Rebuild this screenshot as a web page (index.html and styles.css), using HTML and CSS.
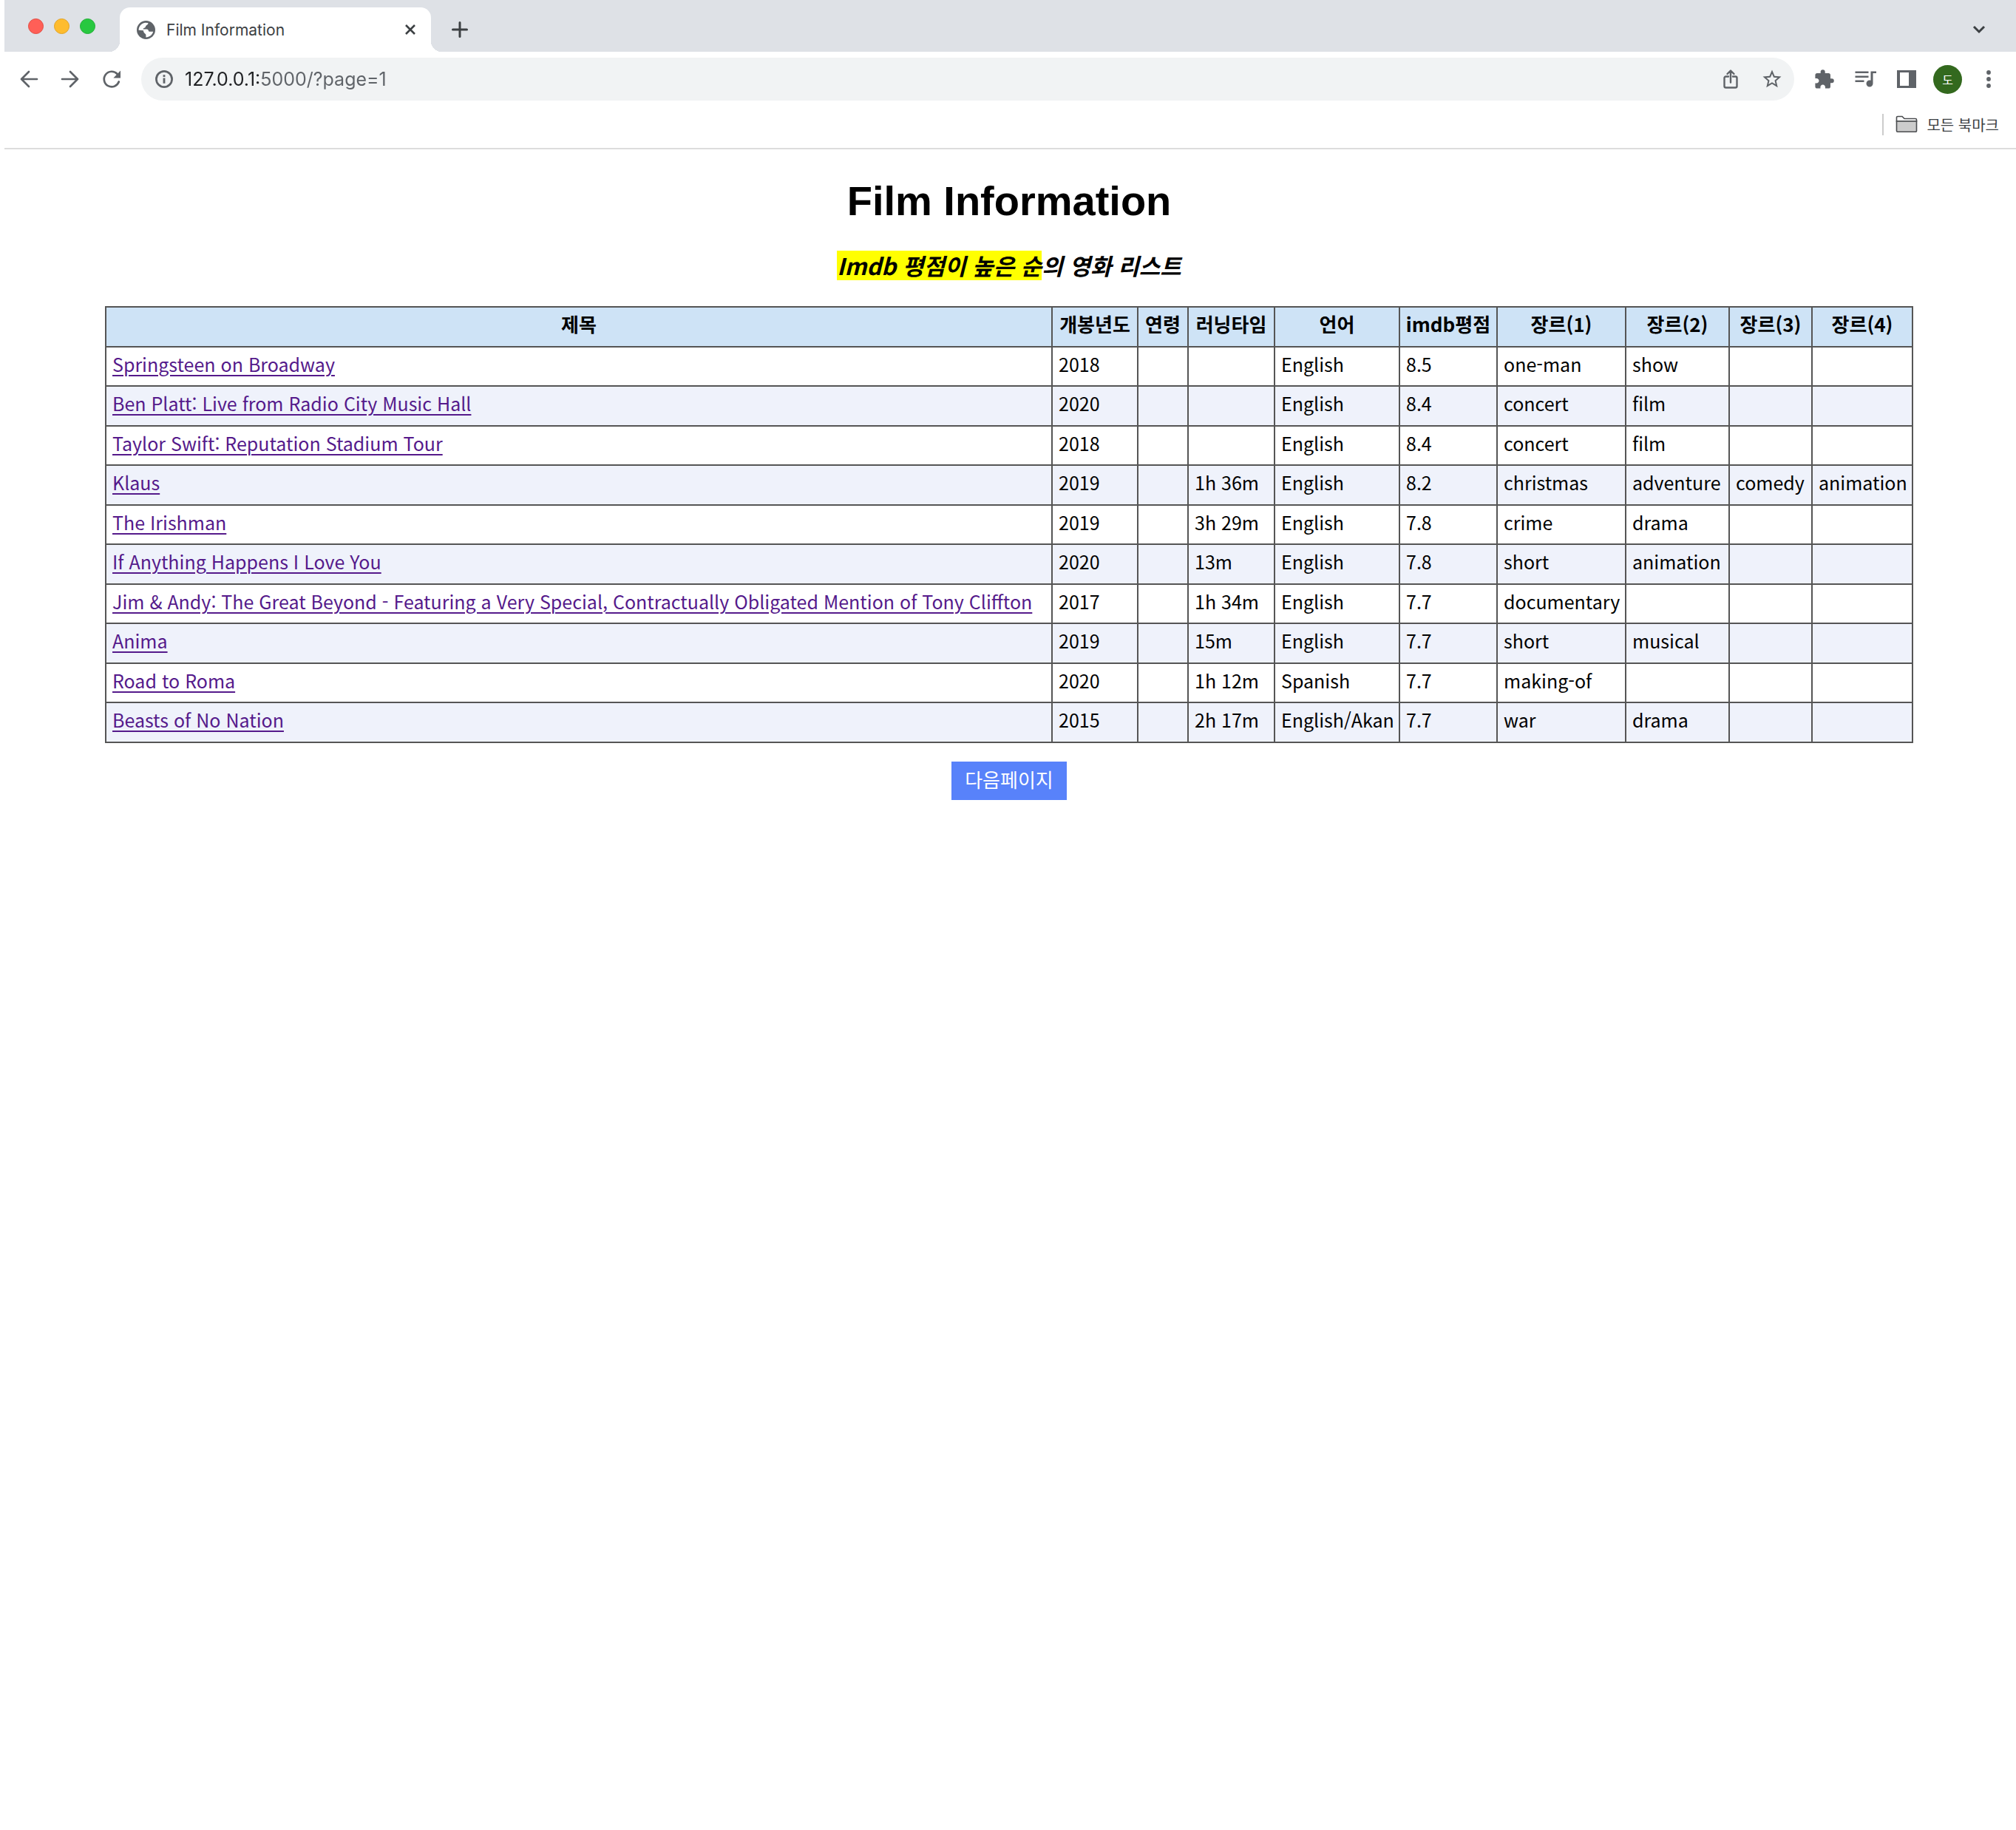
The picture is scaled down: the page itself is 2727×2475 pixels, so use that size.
FILE: index.html
```html
<!DOCTYPE html>
<html lang="ko">
<head>
<meta charset="utf-8">
<title>Film Information</title>
<link rel="stylesheet" href="styles.css">
</head>
<body>
<header class="chrome">
  <div class="tab-strip">
    <div class="lights"><span class="light red"></span><span class="light yellow"></span><span class="light green"></span></div>
    <div class="tab">
      <svg class="favicon" viewBox="0 0 25 25" aria-hidden="true"><circle cx="12.5" cy="12.5" r="12.5" fill="#5f6368"/><path d="M2.6 12.8C2.6 8 6 3.8 11.2 2.8L15.4 3C15.6 6 12.2 5.6 12 8C11.6 10 8.8 9.2 8.6 11.6H13.6C16.4 11.8 15.4 14.8 17 14.8H22.2C21.2 19 17.2 22.4 12.4 22.4V19.4C12.2 16.8 9 17.4 9 13.2Z" fill="#fff"/></svg>
      <span class="tab-title">Film Information</span>
      <button class="icon-button tab-close" aria-label="탭 닫기"><svg width="14" height="14" viewBox="0 0 14 14"><path d="M1 1l12 12M13 1L1 13" stroke="#3c4043" stroke-width="2.6"/></svg></button>
    </div>
    <button class="icon-button new-tab" aria-label="새 탭"><svg width="22" height="22" viewBox="0 0 22 22"><path d="M11 1.5v19M1.5 11h19" stroke="#3c4043" stroke-width="3" stroke-linecap="round"/></svg></button>
    <button class="icon-button tab-search" aria-label="탭 검색"><svg width="18" height="12" viewBox="0 0 18 12"><path d="M2 2l7 7 7-7" fill="none" stroke="#3c4043" stroke-width="3"/></svg></button>
  </div>
  <div class="toolbar">
    <button class="icon-button" aria-label="뒤로"><svg width="32" height="32" viewBox="0 0 32 32"><path class="line" d="M27 16H6M16 6L6 16l10 10"/></svg></button>
    <button class="icon-button" aria-label="앞으로"><svg width="32" height="32" viewBox="0 0 32 32"><path class="line" d="M5 16h21M16 6l10 10-10 10"/></svg></button>
    <button class="icon-button" aria-label="새로고침"><svg width="32" height="32" viewBox="0 0 32 32"><path class="line" d="M25.8 19.5A10.3 10.3 0 1 1 23.6 9"/><path class="solid" d="M28 4.6v10H18.4z"/></svg></button>
    <div class="omnibox">
      <svg width="24" height="24" viewBox="0 0 24 24" aria-hidden="true"><circle class="line" cx="12" cy="12" r="10.6"/><path class="solid" d="M10.6 10.4h2.8v7.4h-2.8zM10.6 6.2h2.8V9h-2.8z"/></svg>
      <input class="url" type="text" aria-label="주소" value="127.0.0.1:5000/?page=1">
      <button class="icon-button small" aria-label="공유"><svg width="24" height="28" viewBox="0 0 24 28"><path class="line thin" d="M9 10.5H5.5a2 2 0 0 0-2 2v11a2 2 0 0 0 2 2h13a2 2 0 0 0 2-2v-11a2 2 0 0 0-2-2H15M12 18.5V3M7.5 7L12 2.5 16.500 7"/></svg></button>
      <button class="icon-button small" aria-label="북마크에 추가"><svg width="30" height="30" viewBox="0 0 24 24"><path class="solid" d="M22 9.240l-7.190-.62L12 2 9.190 8.630 2 9.240l5.460 4.730L5.820 21 12 17.270 18.180 21l-1.630-7.030L22 9.240zM12 15.400l-3.760 2.270 1-4.280-3.320-2.880 4.380-.38L12 6.100l1.710 4.040 4.380.38-3.320 2.880 1 4.280L12 15.400z"/></svg></button>
    </div>
    <button class="icon-button" aria-label="확장 프로그램"><svg width="29" height="29" viewBox="0 0 24 24"><path class="solid" d="M20.500 11H19V7c0-1.100-.9-2-2-2h-4V3.500a2.500 2.500 0 0 0-5 0V5H4c-1.100 0-1.990.9-1.990 2v3.800H3.500c1.490 0 2.700 1.210 2.700 2.700s-1.210 2.700-2.700 2.700H2V20c0 1.100.9 2 2 2h3.800v-1.500c0-1.490 1.210-2.700 2.700-2.700s2.700 1.210 2.700 2.700V22H17c1.100 0 2-.9 2-2v-4h1.500a2.500 2.500 0 0 0 0-5z"/></svg></button>
    <button class="icon-button" aria-label="미디어 제어"><svg width="36" height="36" viewBox="0 0 24 24"><path class="solid" d="M15 5H3v1.700h12zM15 9H3v1.700h12zM3 14.700h8V13H3zM17 5v8.180c-.31-.11-.65-.18-1-.18-1.660 0-3 1.340-3 3s1.340 3 3 3 3-1.340 3-3V6.700h3V5z"/></svg></button>
    <button class="icon-button" aria-label="측면 패널"><svg width="26" height="24" viewBox="0 0 26 24"><path class="solid" fill-rule="evenodd" d="M0 0h26v24H0zM4 3v18h12V3z"/></svg></button>
    <button class="avatar" aria-label="프로필">도</button>
    <button class="icon-button" aria-label="메뉴"><svg width="8" height="26" viewBox="0 0 8 26"><g class="solid"><circle cx="4" cy="4" r="2.900"/><circle cx="4" cy="13" r="2.900"/><circle cx="4" cy="22" r="2.900"/></g></svg></button>
  </div>
  <div class="bookmarks">
    <button class="all-bookmarks"><svg width="30" height="24" viewBox="0 0 30 24" aria-hidden="true"><path d="M1.500 8V3a1.500 1.500 0 0 1 1.500-1.500h6L12 4.500h15A1.500 1.500 0 0 1 28.500 6v2z" fill="#fff" stroke="#4a4c4f" stroke-width="1.600"/><path d="M1.500 8h27v13a1.200 1.200 0 0 1-1.200 1.200H2.700A1.200 1.200 0 0 1 1.500 21z" fill="#ccc" stroke="#4a4c4f" stroke-width="1.600"/></svg>모든 북마크</button>
  </div>
</header>
<main class="page">
  <h1>Film Information</h1>
  <h2><mark>Imdb 평점이 높은 순</mark>의 영화 리스트</h2>
  <table class="films">
    <colgroup><col><col class="c-year"><col class="c-age"><col class="c-time"><col class="c-lang"><col class="c-score"><col class="c-g1"><col class="c-g2"><col class="c-g3"><col class="c-g4"></colgroup>
    <thead>
      <tr><th>제목</th><th>개봉년도</th><th>연령</th><th>러닝타임</th><th>언어</th><th>imdb평점</th><th>장르(1)</th><th>장르(2)</th><th>장르(3)</th><th>장르(4)</th></tr>
    </thead>
    <tbody>
      <tr><td><a href="#">Springsteen on Broadway</a></td><td>2018</td><td></td><td></td><td>English</td><td>8.5</td><td>one-man</td><td>show</td><td></td><td></td></tr>
      <tr><td><a href="#">Ben Platt: Live from Radio City Music Hall</a></td><td>2020</td><td></td><td></td><td>English</td><td>8.4</td><td>concert</td><td>film</td><td></td><td></td></tr>
      <tr><td><a href="#">Taylor Swift: Reputation Stadium Tour</a></td><td>2018</td><td></td><td></td><td>English</td><td>8.4</td><td>concert</td><td>film</td><td></td><td></td></tr>
      <tr><td><a href="#">Klaus</a></td><td>2019</td><td></td><td>1h 36m</td><td>English</td><td>8.2</td><td>christmas</td><td>adventure</td><td>comedy</td><td>animation</td></tr>
      <tr><td><a href="#">The Irishman</a></td><td>2019</td><td></td><td>3h 29m</td><td>English</td><td>7.8</td><td>crime</td><td>drama</td><td></td><td></td></tr>
      <tr><td><a href="#">If Anything Happens I Love You</a></td><td>2020</td><td></td><td>13m</td><td>English</td><td>7.8</td><td>short</td><td>animation</td><td></td><td></td></tr>
      <tr><td><a href="#">Jim &amp; Andy: The Great Beyond - Featuring a Very Special, Contractually Obligated Mention of Tony Cliffton</a></td><td>2017</td><td></td><td>1h 34m</td><td>English</td><td>7.7</td><td>documentary</td><td></td><td></td><td></td></tr>
      <tr><td><a href="#">Anima</a></td><td>2019</td><td></td><td>15m</td><td>English</td><td>7.7</td><td>short</td><td>musical</td><td></td><td></td></tr>
      <tr><td><a href="#">Road to Roma</a></td><td>2020</td><td></td><td>1h 12m</td><td>Spanish</td><td>7.7</td><td>making-of</td><td></td><td></td><td></td></tr>
      <tr><td><a href="#">Beasts of No Nation</a></td><td>2015</td><td></td><td>2h 17m</td><td>English/Akan</td><td>7.7</td><td>war</td><td>drama</td><td></td><td></td></tr>
    </tbody>
  </table>
  <button class="next">다음페이지</button>
</main>
</body>
</html>
```
FILE: styles.css
```css
* { box-sizing: border-box; }

body {
  margin: 0;
  padding-left: 6px;
  background: #fff;
  color: #000;
  font-family: "Noto Sans CJK KR", sans-serif;
}

button {
  margin: 0;
  padding: 0;
  border: 0;
  background: none;
  font-family: inherit;
}

.solid { fill: #5f6368; }
.line { fill: none; stroke: #5f6368; stroke-width: 2.7; stroke-linecap: round; stroke-linejoin: round; }
.line.thin { stroke-width: 2.4; }

.chrome {
  border-bottom: 2px solid #dcdcdc;
  font-family: Inter, "Noto Sans CJK KR", sans-serif;
}

/* Tab strip */
.tab-strip {
  display: flex;
  align-items: flex-end;
  height: 70px;
  padding: 0 40px 0 32px;
  background: #dee1e6;
}
.lights { display: flex; align-items: center; gap: 14px; height: 70px; margin-right: 33px; }
.light { width: 21px; height: 21px; border: 1px solid #e24b41; border-radius: 50%; background: #ff5f57; }
.light.yellow { border-color: #e1a325; background: #febc2e; }
.light.green { border-color: #1fae34; background: #28c840; }

.tab {
  position: relative;
  display: flex;
  align-items: center;
  width: 421px;
  height: 60px;
  padding: 0 21px 0 23px;
  border-radius: 14px 14px 0 0;
  background: #fff;
}
.tab::before,
.tab::after {
  content: "";
  position: absolute;
  bottom: 0;
  width: 14px;
  height: 14px;
}
.tab::before { right: 100%; background: radial-gradient(circle at 0 0, transparent 14px, #fff 14px); }
.tab::after { left: 100%; background: radial-gradient(circle at 100% 0, transparent 14px, #fff 14px); }
.favicon { width: 25px; height: 25px; margin-right: 15px; }
.tab-title { flex: 1; font-size: 21px; color: #3c4043; }

.icon-button { display: flex; align-items: center; justify-content: center; flex: none; width: 32px; height: 32px; }
.icon-button svg { flex: none; }
.icon-button.small { width: 24px; }
.tab-close { width: 14px; }
.new-tab { height: 60px; margin-left: 23px; }
.tab-search { width: 20px; height: 60px; margin-left: auto; }

/* Toolbar */
.toolbar { display: flex; align-items: center; gap: 24px; height: 66px; padding: 8px 21px 0 17px; }
.omnibox {
  flex: 1;
  display: flex;
  align-items: center;
  gap: 32px;
  height: 58px;
  padding: 0 18px 0 19px;
  border-radius: 29px;
  background: #f1f3f4;
}
.url {
  flex: 1;
  min-width: 0;
  height: 40px;
  margin-left: -16px;
  padding: 0;
  border: 0;
  outline: 0;
  background: linear-gradient(to right, #202124 105px, #5f6368 105px);
  background-clip: text;
  -webkit-background-clip: text;
  -webkit-text-fill-color: transparent;
  font: 25px Inter, sans-serif;
}
.avatar {
  width: 39px;
  height: 39px;
  margin: 0 -4px;
  border-radius: 50%;
  background: #33691e;
  color: #fff;
  font-size: 16px;
}

/* Bookmarks bar */
.bookmarks { display: flex; align-items: center; justify-content: flex-end; height: 64px; padding-right: 23px; }
.all-bookmarks {
  display: flex;
  align-items: center;
  gap: 12px;
  height: 29px;
  padding-left: 16px;
  border-left: 2px solid #ccc;
  color: #3c4043;
  font-size: 20px;
}

/* Page */
.page { padding: 34px 139px 0 136px; text-align: center; }
h1 { margin: 0; font: bold 56px/72px "Liberation Sans", sans-serif; }
h2 { margin: 30px 0 34px; font-size: 31px; line-height: 42px; font-style: italic; }
mark { display: inline-block; line-height: 40px; background: #ff0; color: inherit; }

.films { width: 100%; border-collapse: collapse; table-layout: fixed; text-align: left; }
.c-year { width: 116px; }
.c-age { width: 68px; }
.c-time { width: 117px; }
.c-lang { width: 169px; }
.c-score { width: 132px; }
.c-g1 { width: 174px; }
.c-g2 { width: 140px; }
.c-g3 { width: 112px; }
.c-g4 { width: 136px; }
.films th,
.films td { border: 2px solid #555; padding: 0 0 8px 8px; white-space: nowrap; line-height: 36px; }
.films th { height: 54px; padding: 0 0 8px; background: #cee3f6; font-size: 26px; font-weight: bold; text-align: center; }
.films td { height: 53px; font-size: 25px; }
.films tr:nth-child(even) td { height: 54px; background: #eff2fb; }
.films a { color: #551a8b; text-decoration-thickness: 2px; text-underline-offset: 4px; }

.next {
  height: 52px;
  margin-top: 25px;
  padding: 0 18px 6px;
  background: #5882fa;
  color: #fff;
  font-size: 26px;
}
```
